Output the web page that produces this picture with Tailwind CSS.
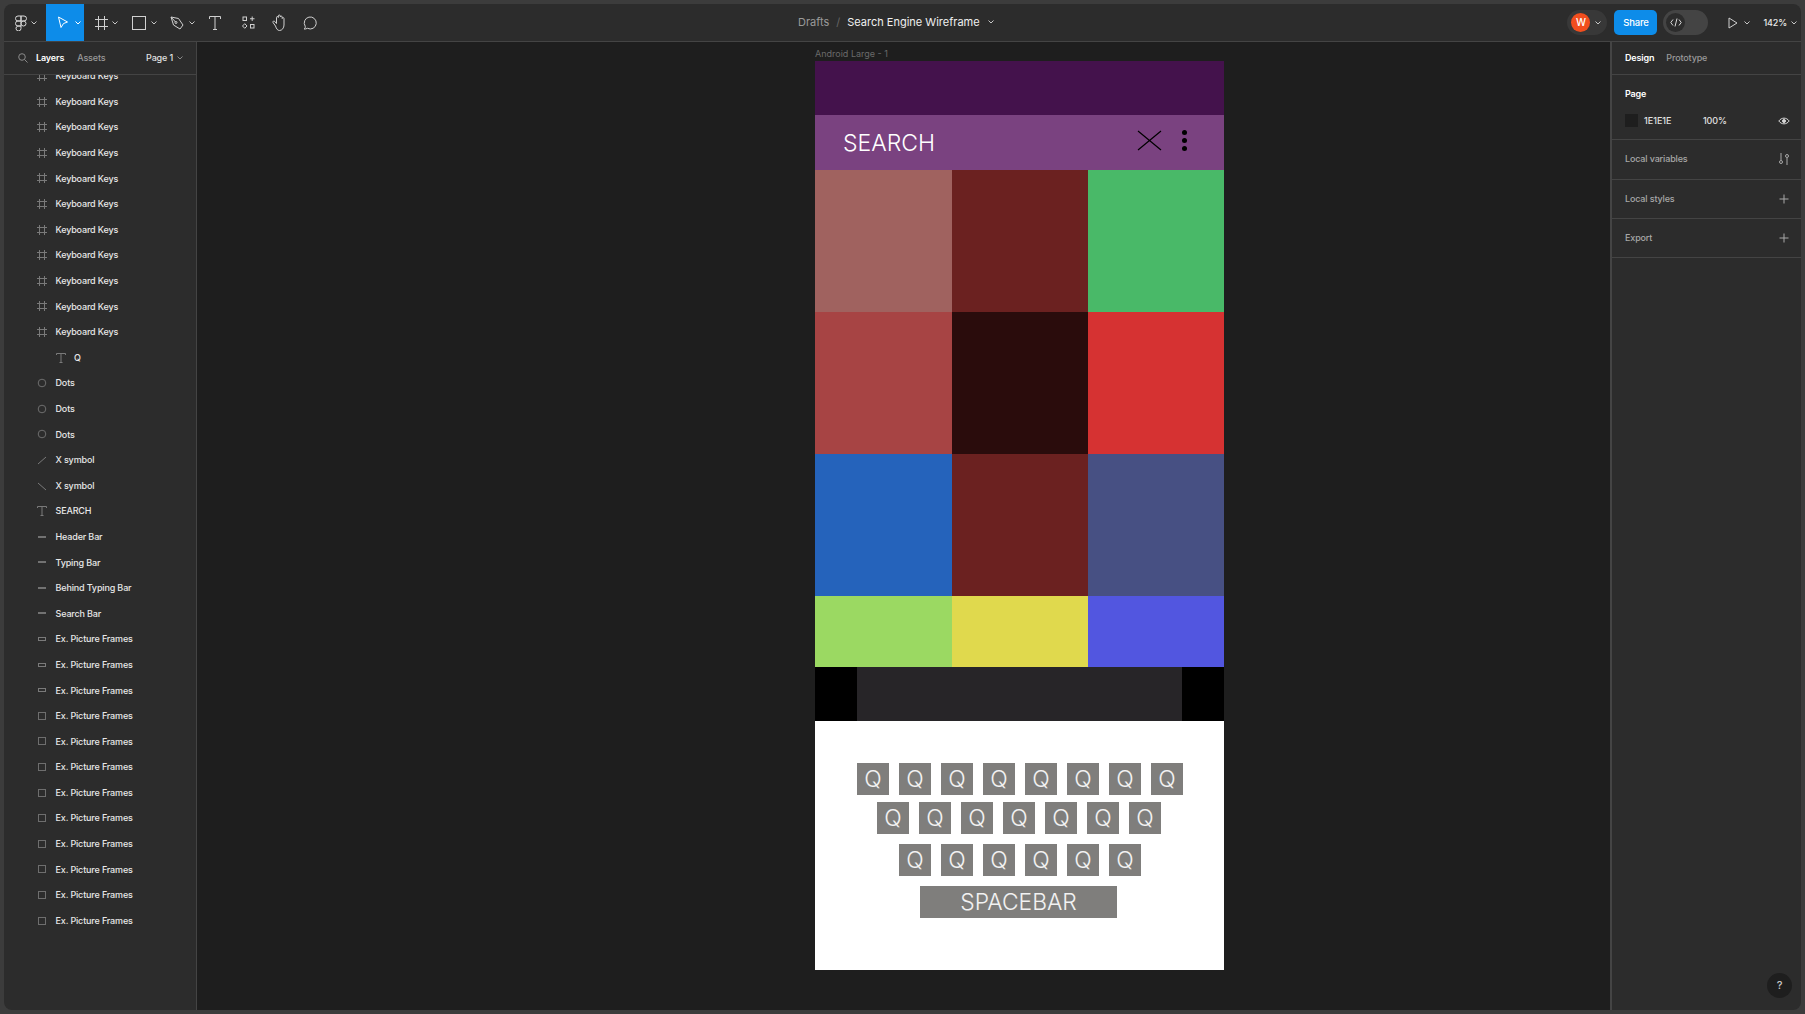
<!DOCTYPE html>
<html><head><meta charset="utf-8"><script src="https://cdn.jsdelivr.net/npm/@tailwindcss/browser@4"></script></head>
<body class="m-0 bg-[#3c3c3c] font-['Inter','Liberation_Sans',sans-serif]">
<div class="w-[1805px] h-[1014px] p-[4px] overflow-hidden">
<div class="w-[1797px] h-[1006px] rounded-[8px] overflow-hidden flex flex-col bg-[#2c2c2c] text-[9px] tracking-[-0.15px] font-medium text-[#e8e8e8]">
<!-- toolbar -->
<header class="h-[38px] shrink-0 flex items-center border-b border-[#444444] relative">
  <div class="w-[42px] h-full flex items-center pl-[10px] gap-[3px]">
    <svg class="w-[14px] h-[16px]" viewBox="0 0 14 16" fill="none" stroke="#d8d8d8" stroke-width="1"><path d="M7 1H4a2.5 2.5 0 0 0 0 5h3zM7 1h3a2.5 2.5 0 0 1 0 5H7zM7 6H4a2.5 2.5 0 0 0 0 5h3zM7 11H4a2.5 2.5 0 1 0 3 2.4zM7 8.5a2.5 2.5 0 1 0 5 0a2.5 2.5 0 1 0-5 0"/></svg>
    <svg class="w-[6px] h-[4px]" viewBox="0 0 6 4" fill="none" stroke="#c8c8c8"><path d="M.5.5 3 3 5.500.5"/></svg>
  </div>
  <div class="w-[38px] h-full bg-[#0d8ce9] flex items-center pl-[11px] gap-[6px]">
    <svg class="w-[12px] h-[13px]" viewBox="0 0 12 13" fill="none" stroke="#fff"><path d="M1.500 1 10.500 6 6.500 7.500 4 11.500z"/></svg>
    <svg class="w-[6px] h-[4px]" viewBox="0 0 6 4" fill="none" stroke="#fff"><path d="M.5.5 3 3 5.500.5"/></svg>
  </div>
  <div class="h-full flex items-center pl-[11px] gap-[4px] w-[38px]">
    <svg class="w-[13px] h-[14px]" viewBox="0 0 13 14" fill="none" stroke="#d0d0d0"><path d="M3.500 0v14M9.500 0v14M0 3.500h13M0 10.500h13"/></svg>
    <svg class="w-[6px] h-[4px]" viewBox="0 0 6 4" fill="none" stroke="#c8c8c8"><path d="M.5.5 3 3 5.500.5"/></svg>
  </div>
  <div class="h-full flex items-center pl-[10px] gap-[5px] w-[39px]">
    <svg class="w-[14px] h-[14px]" viewBox="0 0 14 14" fill="none" stroke="#d0d0d0"><rect x=".5" y=".5" width="13" height="13"/></svg>
    <svg class="w-[6px] h-[4px]" viewBox="0 0 6 4" fill="none" stroke="#c8c8c8"><path d="M.5.5 3 3 5.500.5"/></svg>
  </div>
  <div class="h-full flex items-center pl-[9px] gap-[5px] w-[39px]">
    <svg class="w-[14px] h-[14px]" viewBox="0 0 14 14" fill="none" stroke="#d0d0d0"><path d="M1 1 8.500 2.500 13 9 10 13 3.500 9zM1 1 5.500 6"/><circle cx="6" cy="6.500" r="1"/></svg>
    <svg class="w-[6px] h-[4px]" viewBox="0 0 6 4" fill="none" stroke="#c8c8c8"><path d="M.5.5 3 3 5.500.5"/></svg>
  </div>
  <div class="h-full flex items-center justify-center w-[24px] ml-[3px]">
    <svg class="w-[12px] h-[14px]" viewBox="0 0 12 14" fill="none" stroke="#d0d0d0"><path d="M.5 3V.500h11V3M6 .5v13M4 13.500h4"/></svg>
  </div>
  <div class="h-full flex items-center justify-center w-[35px] ml-[4px]">
    <svg class="w-[13px] h-[13px]" viewBox="0 0 13 13" fill="none" stroke="#d0d0d0"><rect x="1" y="1" width="3.500" height="3.500"/><rect x="8.500" y="8.500" width="3.500" height="3.500"/><path d="M10.200.5v4.500M8 2.750h4.500M2.750 7.700 5 10 2.750 12.300.5 10z"/></svg>
  </div>
  <div class="h-full flex items-center justify-center w-[28px]">
    <svg class="w-[16px] h-[17px]" viewBox="0 0 16 17" fill="none" stroke="#d0d0d0"><path d="M3.500 12 1 8.500c-.6-1.200 1-2 1.800-1L4.500 9.500V3.500c0-1.300 1.800-1.300 1.800 0V2c0-1.300 2-1.300 2 0v1c0-1.200 1.900-1.200 1.900 0v1.500c0-1.200 1.800-1.200 1.800 0V11c0 3-2 5.500-4.500 5.500-2 0-3.100-1.700-4-4.500z"/></svg>
  </div>
  <div class="h-full flex items-center justify-center w-[33px]">
    <svg class="w-[15px] h-[15px]" viewBox="0 0 15 15" fill="none" stroke="#d0d0d0"><path d="M1 14c1.200-.6 1.500-1.800 1.200-2.800A6 6 0 1 1 4.500 13.300C3.500 13.900 2 14.100 1 14z"/></svg>
  </div>
  <div class="absolute left-[794px] top-0 h-[36px] flex items-center text-[11px] tracking-normal gap-[7px] font-normal">
    <span class="text-[#9a9a9a]">Drafts</span><span class="text-[#666666]">/</span><span class="text-[#f0f0f0]">Search Engine Wireframe</span>
    <svg class="w-[6px] h-[4px] ml-[1px]" viewBox="0 0 6 4" fill="none" stroke="#c8c8c8"><path d="M.5.5 3 3 5.500.5"/></svg>
  </div>
  <div class="ml-auto flex items-center h-full pr-[4px]">
    <div class="w-[40px] h-[25px] rounded-full bg-[#383838] flex items-center pl-[4px] gap-[5px]">
      <div class="w-[19px] h-[19px] rounded-full bg-[#f24e1e] text-white text-[10px] flex items-center justify-center">W</div>
      <svg class="w-[6px] h-[4px]" viewBox="0 0 6 4" fill="none" stroke="#c8c8c8"><path d="M.5.5 3 3 5.500.5"/></svg>
    </div>
    <div class="ml-[7px] w-[43px] h-[25px] pt-[1px] rounded-[5px] bg-[#0d8ce9] text-white text-[9.500px] flex items-center justify-center">Share</div>
    <div class="ml-[6px] w-[45px] h-[25px] rounded-full bg-[#444444] flex items-center pl-[3px]">
      <div class="w-[19px] h-[19px] rounded-full bg-[#2c2c2c] flex items-center justify-center">
        <svg class="w-[12px] h-[9px]" viewBox="0 0 12 9" fill="none" stroke="#d8d8d8"><path d="M3 1.500.8 4.500 3 7.500M9 1.500l2.200 3L9 7.500M7 .5 5 8.500"/></svg>
      </div>
    </div>
    <svg class="ml-[20px] w-[10px] h-[12px]" viewBox="0 0 10 12" fill="none" stroke="#d0d0d0"><path d="M1 1 9 6 1 11z"/></svg>
    <svg class="ml-[6px] w-[6px] h-[4px]" viewBox="0 0 6 4" fill="none" stroke="#c8c8c8"><path d="M.5.5 3 3 5.500.5"/></svg>
    <span class="ml-[13px] text-[#e8e8e8]">142%</span>
    <svg class="ml-[4px] w-[6px] h-[4px]" viewBox="0 0 6 4" fill="none" stroke="#c8c8c8"><path d="M.5.5 3 3 5.500.5"/></svg>
  </div>
</header>
<div class="flex flex-1 min-h-0">
<!-- left -->
<aside class="w-[193px] shrink-0 border-r border-[#444444] flex flex-col">
  <div class="h-[33px] shrink-0 border-b border-[#444444] flex items-center pl-[14px] pr-[13px]">
    <svg class="w-[10px] h-[10px]" viewBox="0 0 10 10" fill="none" stroke="#8a8a8a"><circle cx="4" cy="4" r="3.300"/><path d="M6.500 6.500 9.500 9.500"/></svg>
    <span class="ml-[8px] text-white font-semibold">Layers</span>
    <span class="ml-[13px] text-[#9a9a9a]">Assets</span>
    <span class="ml-auto text-[#e0e0e0]">Page 1</span>
    <svg class="ml-[4px] w-[6px] h-[4px]" viewBox="0 0 6 4" fill="none" stroke="#8a8a8a"><path d="M.5.5 3 3 5.500.5"/></svg>
  </div>
  <div class="flex-1 overflow-hidden">
    <div class="-mt-[11.800px]">
      <div class="flex items-center h-[25.6px] pl-[32px] gap-[7.500px]"><svg class="w-[12px] h-[12px]" viewBox="0 0 12 12" fill="none" stroke="#7a7a7a"><path d="M3.500 1v10M8.500 1v10M1 3.500h10M1 8.500h10"/></svg><span>Keyboard Keys</span></div>
      <div class="flex items-center h-[25.6px] pl-[32px] gap-[7.500px]"><svg class="w-[12px] h-[12px]" viewBox="0 0 12 12" fill="none" stroke="#7a7a7a"><path d="M3.500 1v10M8.500 1v10M1 3.500h10M1 8.500h10"/></svg><span>Keyboard Keys</span></div>
      <div class="flex items-center h-[25.6px] pl-[32px] gap-[7.500px]"><svg class="w-[12px] h-[12px]" viewBox="0 0 12 12" fill="none" stroke="#7a7a7a"><path d="M3.500 1v10M8.500 1v10M1 3.500h10M1 8.500h10"/></svg><span>Keyboard Keys</span></div>
      <div class="flex items-center h-[25.6px] pl-[32px] gap-[7.500px]"><svg class="w-[12px] h-[12px]" viewBox="0 0 12 12" fill="none" stroke="#7a7a7a"><path d="M3.500 1v10M8.500 1v10M1 3.500h10M1 8.500h10"/></svg><span>Keyboard Keys</span></div>
      <div class="flex items-center h-[25.6px] pl-[32px] gap-[7.500px]"><svg class="w-[12px] h-[12px]" viewBox="0 0 12 12" fill="none" stroke="#7a7a7a"><path d="M3.500 1v10M8.500 1v10M1 3.500h10M1 8.500h10"/></svg><span>Keyboard Keys</span></div>
      <div class="flex items-center h-[25.6px] pl-[32px] gap-[7.500px]"><svg class="w-[12px] h-[12px]" viewBox="0 0 12 12" fill="none" stroke="#7a7a7a"><path d="M3.500 1v10M8.500 1v10M1 3.500h10M1 8.500h10"/></svg><span>Keyboard Keys</span></div>
      <div class="flex items-center h-[25.6px] pl-[32px] gap-[7.500px]"><svg class="w-[12px] h-[12px]" viewBox="0 0 12 12" fill="none" stroke="#7a7a7a"><path d="M3.500 1v10M8.500 1v10M1 3.500h10M1 8.500h10"/></svg><span>Keyboard Keys</span></div>
      <div class="flex items-center h-[25.6px] pl-[32px] gap-[7.500px]"><svg class="w-[12px] h-[12px]" viewBox="0 0 12 12" fill="none" stroke="#7a7a7a"><path d="M3.500 1v10M8.500 1v10M1 3.500h10M1 8.500h10"/></svg><span>Keyboard Keys</span></div>
      <div class="flex items-center h-[25.6px] pl-[32px] gap-[7.500px]"><svg class="w-[12px] h-[12px]" viewBox="0 0 12 12" fill="none" stroke="#7a7a7a"><path d="M3.500 1v10M8.500 1v10M1 3.500h10M1 8.500h10"/></svg><span>Keyboard Keys</span></div>
      <div class="flex items-center h-[25.6px] pl-[32px] gap-[7.500px]"><svg class="w-[12px] h-[12px]" viewBox="0 0 12 12" fill="none" stroke="#7a7a7a"><path d="M3.500 1v10M8.500 1v10M1 3.500h10M1 8.500h10"/></svg><span>Keyboard Keys</span></div>
      <div class="flex items-center h-[25.6px] pl-[32px] gap-[7.500px]"><svg class="w-[12px] h-[12px]" viewBox="0 0 12 12" fill="none" stroke="#7a7a7a"><path d="M3.500 1v10M8.500 1v10M1 3.500h10M1 8.500h10"/></svg><span>Keyboard Keys</span></div>
      <div class="flex items-center h-[25.6px] pl-[51px] gap-[7px]"><svg class="w-[12px] h-[12px]" viewBox="0 0 12 12" fill="none" stroke="#7a7a7a"><path d="M1.500 3V1.500h9V3M6 1.500v9M4.500 10.500h3"/></svg><span>Q</span></div>
      <div class="flex items-center h-[25.6px] pl-[32px] gap-[7.500px]"><svg class="w-[12px] h-[12px]" viewBox="0 0 12 12" fill="none" stroke="#6e6e6e"><circle cx="6" cy="6" r="3.800"/></svg><span>Dots</span></div>
      <div class="flex items-center h-[25.6px] pl-[32px] gap-[7.500px]"><svg class="w-[12px] h-[12px]" viewBox="0 0 12 12" fill="none" stroke="#6e6e6e"><circle cx="6" cy="6" r="3.800"/></svg><span>Dots</span></div>
      <div class="flex items-center h-[25.6px] pl-[32px] gap-[7.500px]"><svg class="w-[12px] h-[12px]" viewBox="0 0 12 12" fill="none" stroke="#6e6e6e"><circle cx="6" cy="6" r="3.800"/></svg><span>Dots</span></div>
      <div class="flex items-center h-[25.6px] pl-[32px] gap-[7.500px]"><svg class="w-[12px] h-[12px]" viewBox="0 0 12 12" fill="none" stroke="#7a7a7a"><path d="M2 10 10 3"/></svg><span>X symbol</span></div>
      <div class="flex items-center h-[25.6px] pl-[32px] gap-[7.500px]"><svg class="w-[12px] h-[12px]" viewBox="0 0 12 12" fill="none" stroke="#7a7a7a"><path d="M2 3 10 10"/></svg><span>X symbol</span></div>
      <div class="flex items-center h-[25.6px] pl-[32px] gap-[7.500px]"><svg class="w-[12px] h-[12px]" viewBox="0 0 12 12" fill="none" stroke="#7a7a7a"><path d="M1.500 3V1.500h9V3M6 1.500v9M4.500 10.500h3"/></svg><span>SEARCH</span></div>
      <div class="flex items-center h-[25.6px] pl-[32px] gap-[7.500px]"><svg class="w-[12px] h-[12px]" viewBox="0 0 12 12" fill="none" stroke="#8a8a8a" stroke-width="1.500"><path d="M2 6h8"/></svg><span>Header Bar</span></div>
      <div class="flex items-center h-[25.6px] pl-[32px] gap-[7.500px]"><svg class="w-[12px] h-[12px]" viewBox="0 0 12 12" fill="none" stroke="#8a8a8a" stroke-width="1.500"><path d="M2 6h8"/></svg><span>Typing Bar</span></div>
      <div class="flex items-center h-[25.6px] pl-[32px] gap-[7.500px]"><svg class="w-[12px] h-[12px]" viewBox="0 0 12 12" fill="none" stroke="#8a8a8a" stroke-width="1.500"><path d="M2 6h8"/></svg><span>Behind Typing Bar</span></div>
      <div class="flex items-center h-[25.6px] pl-[32px] gap-[7.500px]"><svg class="w-[12px] h-[12px]" viewBox="0 0 12 12" fill="none" stroke="#8a8a8a" stroke-width="1.500"><path d="M2 6h8"/></svg><span>Search Bar</span></div>
      <div class="flex items-center h-[25.6px] pl-[32px] gap-[7.500px]"><svg class="w-[12px] h-[12px]" viewBox="0 0 12 12" fill="none" stroke="#7a7a7a"><rect x="2.500" y="4.500" width="7" height="3"/></svg><span>Ex. Picture Frames</span></div>
      <div class="flex items-center h-[25.6px] pl-[32px] gap-[7.500px]"><svg class="w-[12px] h-[12px]" viewBox="0 0 12 12" fill="none" stroke="#7a7a7a"><rect x="2.500" y="4.500" width="7" height="3"/></svg><span>Ex. Picture Frames</span></div>
      <div class="flex items-center h-[25.6px] pl-[32px] gap-[7.500px]"><svg class="w-[12px] h-[12px]" viewBox="0 0 12 12" fill="none" stroke="#7a7a7a"><rect x="2.500" y="4.500" width="7" height="3"/></svg><span>Ex. Picture Frames</span></div>
      <div class="flex items-center h-[25.6px] pl-[32px] gap-[7.500px]"><svg class="w-[12px] h-[12px]" viewBox="0 0 12 12" fill="none" stroke="#6e6e6e"><rect x="2.500" y="2.500" width="7" height="7"/></svg><span>Ex. Picture Frames</span></div>
      <div class="flex items-center h-[25.6px] pl-[32px] gap-[7.500px]"><svg class="w-[12px] h-[12px]" viewBox="0 0 12 12" fill="none" stroke="#6e6e6e"><rect x="2.500" y="2.500" width="7" height="7"/></svg><span>Ex. Picture Frames</span></div>
      <div class="flex items-center h-[25.6px] pl-[32px] gap-[7.500px]"><svg class="w-[12px] h-[12px]" viewBox="0 0 12 12" fill="none" stroke="#6e6e6e"><rect x="2.500" y="2.500" width="7" height="7"/></svg><span>Ex. Picture Frames</span></div>
      <div class="flex items-center h-[25.6px] pl-[32px] gap-[7.500px]"><svg class="w-[12px] h-[12px]" viewBox="0 0 12 12" fill="none" stroke="#6e6e6e"><rect x="2.500" y="2.500" width="7" height="7"/></svg><span>Ex. Picture Frames</span></div>
      <div class="flex items-center h-[25.6px] pl-[32px] gap-[7.500px]"><svg class="w-[12px] h-[12px]" viewBox="0 0 12 12" fill="none" stroke="#6e6e6e"><rect x="2.500" y="2.500" width="7" height="7"/></svg><span>Ex. Picture Frames</span></div>
      <div class="flex items-center h-[25.6px] pl-[32px] gap-[7.500px]"><svg class="w-[12px] h-[12px]" viewBox="0 0 12 12" fill="none" stroke="#6e6e6e"><rect x="2.500" y="2.500" width="7" height="7"/></svg><span>Ex. Picture Frames</span></div>
      <div class="flex items-center h-[25.6px] pl-[32px] gap-[7.500px]"><svg class="w-[12px] h-[12px]" viewBox="0 0 12 12" fill="none" stroke="#6e6e6e"><rect x="2.500" y="2.500" width="7" height="7"/></svg><span>Ex. Picture Frames</span></div>
      <div class="flex items-center h-[25.6px] pl-[32px] gap-[7.500px]"><svg class="w-[12px] h-[12px]" viewBox="0 0 12 12" fill="none" stroke="#6e6e6e"><rect x="2.500" y="2.500" width="7" height="7"/></svg><span>Ex. Picture Frames</span></div>
      <div class="flex items-center h-[25.6px] pl-[32px] gap-[7.500px]"><svg class="w-[12px] h-[12px]" viewBox="0 0 12 12" fill="none" stroke="#6e6e6e"><rect x="2.500" y="2.500" width="7" height="7"/></svg><span>Ex. Picture Frames</span></div>
    </div>
  </div>
</aside>
<!-- canvas -->
<main class="flex-1 bg-[#1e1e1e] pl-[618px] pt-[5px] overflow-hidden tracking-normal">
  <div class="text-[9px] leading-[14px] h-[14px] text-[#6a6a6a] font-normal">Android Large - 1</div>
  <div class="w-[409px]">
    <div class="h-[54px] bg-[#44124c]"></div>
    <div class="h-[55px] bg-[#7a4280] flex items-center pl-[28px] pr-[37px]">
      <span class="text-[23px] font-light text-white mt-[2px]">SEARCH</span>
      <svg class="ml-auto w-[25px] h-[21px] -mt-[4px]" viewBox="0 0 25 21" fill="none" stroke="#000" stroke-width="1.200"><path d="M1 1 24 20M24 1 1 20"/></svg>
      <div class="ml-[20px] -mt-[4px] flex flex-col gap-[3px]"><span class="block w-[5px] h-[5px] rounded-full bg-black"></span><span class="block w-[5px] h-[5px] rounded-full bg-black"></span><span class="block w-[5px] h-[5px] rounded-full bg-black"></span></div>
    </div>
    <div class="grid grid-cols-[137px_136px_136px] grid-rows-[142px_142px_142px_71px]">
      <div class="bg-[#a0625f]"></div><div class="bg-[#6b2120]"></div><div class="bg-[#49b968]"></div>
      <div class="bg-[#a74444]"></div><div class="bg-[#2a0c0c]"></div><div class="bg-[#d63232]"></div>
      <div class="bg-[#2563bb]"></div><div class="bg-[#6b2120]"></div><div class="bg-[#475083]"></div>
      <div class="bg-[#9bd962]"></div><div class="bg-[#e0d94d]"></div><div class="bg-[#5256e0]"></div>
    </div>
    <div class="h-[54px] bg-black px-[42px]"><div class="h-full bg-[#272528]"></div></div>
    <div class="h-[249px] bg-white pt-[42px]">
      <div class="flex gap-[10px] ml-[42px]">
        <div class="w-[32px] h-[32px] bg-[#7f7e7c] text-white/90 text-[23px] font-light leading-[32px] text-center">Q</div>
        <div class="w-[32px] h-[32px] bg-[#7f7e7c] text-white/90 text-[23px] font-light leading-[32px] text-center">Q</div>
        <div class="w-[32px] h-[32px] bg-[#7f7e7c] text-white/90 text-[23px] font-light leading-[32px] text-center">Q</div>
        <div class="w-[32px] h-[32px] bg-[#7f7e7c] text-white/90 text-[23px] font-light leading-[32px] text-center">Q</div>
        <div class="w-[32px] h-[32px] bg-[#7f7e7c] text-white/90 text-[23px] font-light leading-[32px] text-center">Q</div>
        <div class="w-[32px] h-[32px] bg-[#7f7e7c] text-white/90 text-[23px] font-light leading-[32px] text-center">Q</div>
        <div class="w-[32px] h-[32px] bg-[#7f7e7c] text-white/90 text-[23px] font-light leading-[32px] text-center">Q</div>
        <div class="w-[32px] h-[32px] bg-[#7f7e7c] text-white/90 text-[23px] font-light leading-[32px] text-center">Q</div>
      </div>
      <div class="flex gap-[10px] ml-[62px] mt-[7px]">
        <div class="w-[32px] h-[32px] bg-[#7f7e7c] text-white/90 text-[23px] font-light leading-[32px] text-center">Q</div>
        <div class="w-[32px] h-[32px] bg-[#7f7e7c] text-white/90 text-[23px] font-light leading-[32px] text-center">Q</div>
        <div class="w-[32px] h-[32px] bg-[#7f7e7c] text-white/90 text-[23px] font-light leading-[32px] text-center">Q</div>
        <div class="w-[32px] h-[32px] bg-[#7f7e7c] text-white/90 text-[23px] font-light leading-[32px] text-center">Q</div>
        <div class="w-[32px] h-[32px] bg-[#7f7e7c] text-white/90 text-[23px] font-light leading-[32px] text-center">Q</div>
        <div class="w-[32px] h-[32px] bg-[#7f7e7c] text-white/90 text-[23px] font-light leading-[32px] text-center">Q</div>
        <div class="w-[32px] h-[32px] bg-[#7f7e7c] text-white/90 text-[23px] font-light leading-[32px] text-center">Q</div>
      </div>
      <div class="flex gap-[10px] ml-[84px] mt-[10px]">
        <div class="w-[32px] h-[32px] bg-[#7f7e7c] text-white/90 text-[23px] font-light leading-[32px] text-center">Q</div>
        <div class="w-[32px] h-[32px] bg-[#7f7e7c] text-white/90 text-[23px] font-light leading-[32px] text-center">Q</div>
        <div class="w-[32px] h-[32px] bg-[#7f7e7c] text-white/90 text-[23px] font-light leading-[32px] text-center">Q</div>
        <div class="w-[32px] h-[32px] bg-[#7f7e7c] text-white/90 text-[23px] font-light leading-[32px] text-center">Q</div>
        <div class="w-[32px] h-[32px] bg-[#7f7e7c] text-white/90 text-[23px] font-light leading-[32px] text-center">Q</div>
        <div class="w-[32px] h-[32px] bg-[#7f7e7c] text-white/90 text-[23px] font-light leading-[32px] text-center">Q</div>
      </div>
      <div class="w-[197px] h-[32px] ml-[105px] mt-[10px] bg-[#7f7e7c] text-white/90 text-[22.800px] font-light leading-[32px] text-center">SPACEBAR</div>
    </div>
  </div>
</main>
<!-- right -->
<aside class="w-[191px] shrink-0 border-l-2 border-[#444444] flex flex-col relative">
  <div class="h-[33px] border-b border-[#444444] flex items-center pl-[13px] gap-[12px]"><span class="text-white font-semibold">Design</span><span class="text-[#9a9a9a]">Prototype</span></div>
  <div class="h-[65px] border-b border-[#444444] pl-[13px]">
    <div class="mt-[12px] text-white font-semibold leading-[14px]">Page</div>
    <div class="mt-[13px] flex items-center pr-[11px]">
      <div class="w-[13px] h-[13px] bg-[#1e1e1e]"></div><span class="ml-[6px] w-[59px] tracking-normal text-[#e0e0e0]">1E1E1E</span><span class="text-[#e0e0e0]">100%</span>
      <svg class="ml-auto w-[12px] h-[8px]" viewBox="0 0 12 8" fill="none" stroke="#d8d8d8"><path d="M.8 4C3.500.2 8.500.2 11.200 4 8.500 7.800 3.500 7.800.8 4z"/><circle cx="6" cy="4" r="1.500" fill="#d8d8d8"/></svg>
    </div>
  </div>
  <div class="h-[40px] pb-[1px] border-b border-[#444444] flex items-center pl-[13px] pr-[11px] text-[#a8a8a8]"><span>Local variables</span>
    <svg class="ml-auto w-[12px] h-[12px]" viewBox="0 0 12 12" fill="none" stroke="#a8a8a8"><path d="M3 0v7M9 5v7"/><circle cx="3" cy="9" r="1.500"/><circle cx="9" cy="3" r="1.500"/></svg></div>
  <div class="h-[39px] border-b border-[#444444] flex items-center pl-[13px] pr-[11px] text-[#a8a8a8]"><span>Local styles</span>
    <svg class="ml-auto w-[12px] h-[12px]" viewBox="0 0 12 12" fill="none" stroke="#a8a8a8"><path d="M6 1.500v9M1.500 6h9"/></svg></div>
  <div class="h-[39px] border-b border-[#444444] flex items-center pl-[13px] pr-[11px] text-[#a8a8a8]"><span>Export</span>
    <svg class="ml-auto w-[12px] h-[12px]" viewBox="0 0 12 12" fill="none" stroke="#a8a8a8"><path d="M6 1.500v9M1.500 6h9"/></svg></div>
  <div class="absolute right-[9px] bottom-[12px] w-[25px] h-[25px] rounded-full bg-[#1e1e1e] text-[#c8c8c8] text-[11px] flex items-center justify-center">?</div>
</aside>
</div>
</div>
</div>
</body></html>
